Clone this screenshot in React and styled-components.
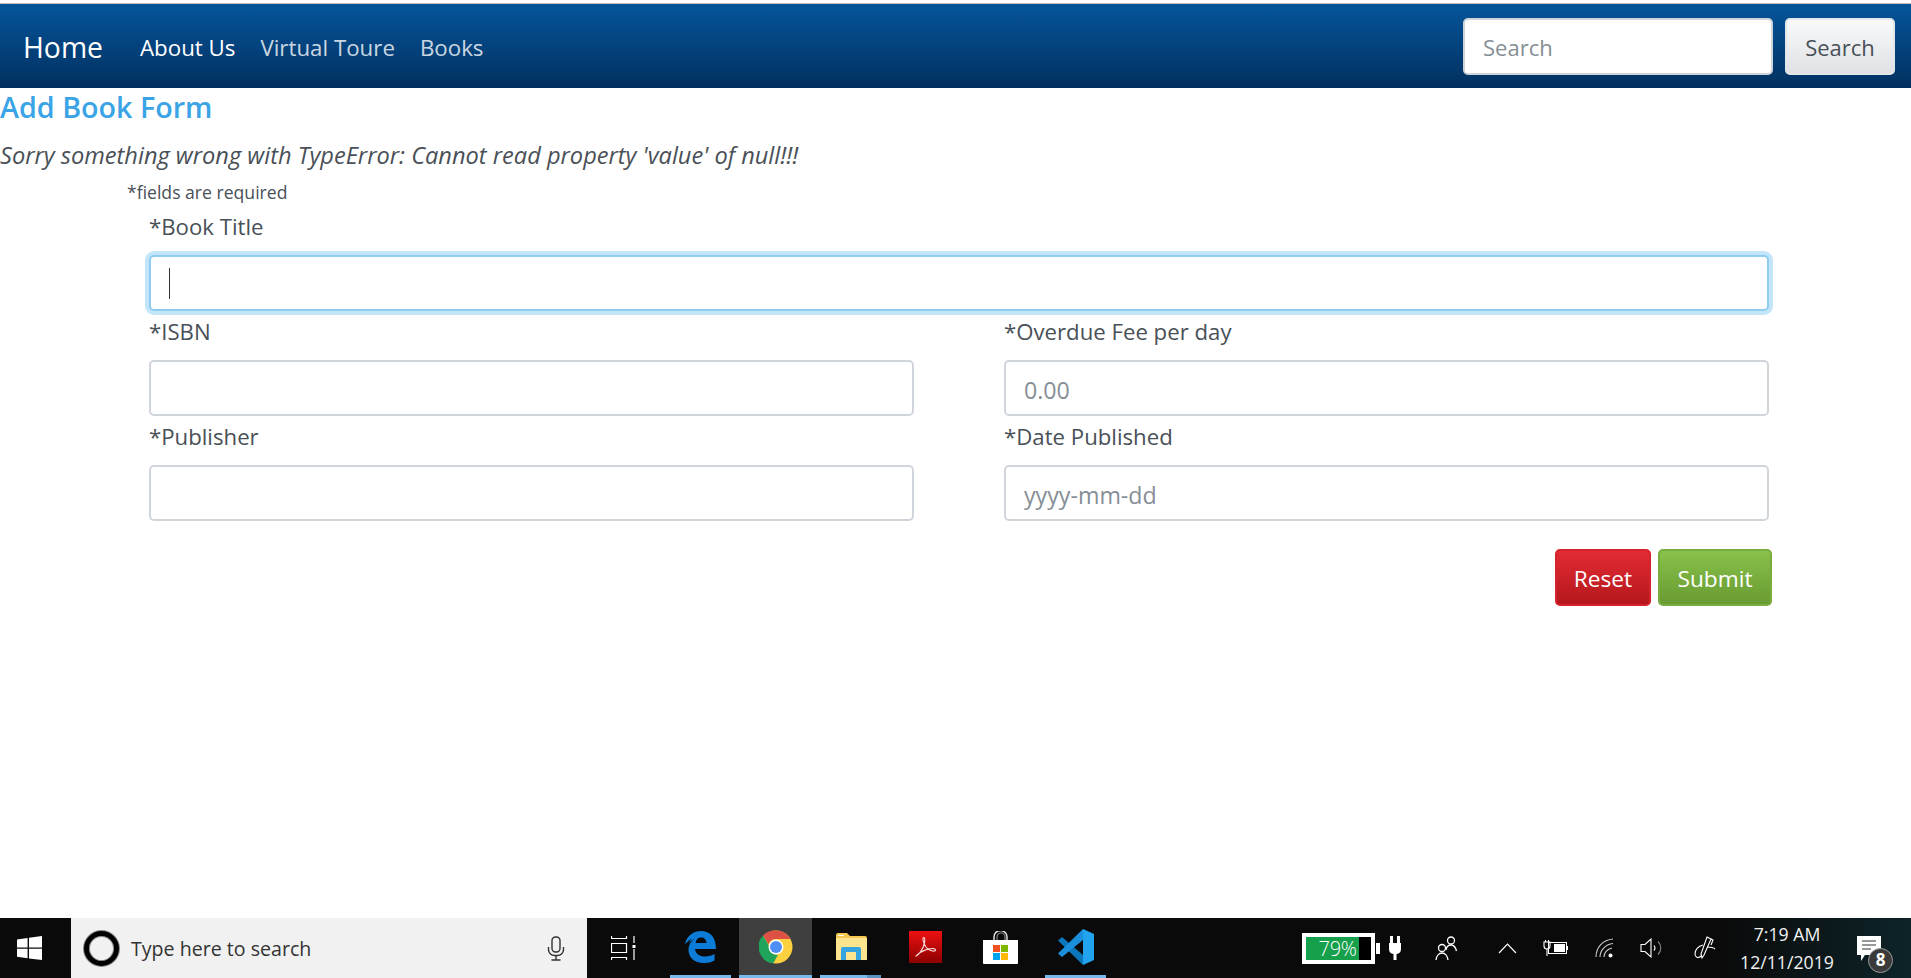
import React from 'react'
import styled, { createGlobalStyle } from 'styled-components'

const FONT = `'Open Sans', 'Noto Sans', sans-serif`

const GlobalStyle = createGlobalStyle`
  html, body {
    margin: 0;
    padding: 0;
    height: 100%;
    background: #fff;
    overflow: hidden;
  }
  * { box-sizing: border-box; }
  #root { height: 100%; }
`

const Page = styled.div`
  height: 978px;
  display: flex;
  flex-direction: column;
  font-family: ${FONT};
  color: #495057;
`

//------------------------------------------------------------------------
// Navbar
//------------------------------------------------------------------------

const Navbar = styled.nav`
  height: 85px;
  flex: none;
  display: flex;
  align-items: center;
  padding: 0 16px 0 23px;
  border-top: 1px solid #bdbdbd;
  margin-top: 3px;
  background: linear-gradient(180deg, #05559b 0%, #02305f 100%);
`

const Brand = styled.a`
  font-size: 28.3px;
  padding-top: 2px;
  color: #fff;
  margin-right: 37px;
`

const NavLink = styled.a`
  font-size: 22.3px;
  padding-top: 2px;
  color: ${props => (props.active ? '#fff' : 'rgba(255,255,255,0.8)')};
  margin-right: 25px;
`

const SearchForm = styled.form`
  margin-left: auto;
  display: flex;
  gap: 12px;
`

const SearchInput = styled.input`
  width: 310px;
  height: 57px;
  padding: 2px 18px 0;
  border: 2px solid #ced4da;
  border-radius: 5px;
  font: 22px ${FONT};
  &::placeholder { color: #868e96; opacity: 1; }
`

const SearchButton = styled.button`
  width: 110px;
  height: 57px;
  padding: 2px 0 0;
  border: 2px solid #e4e7ea;
  border-radius: 5px;
  font: 22px ${FONT};
  color: #495057;
  background: linear-gradient(180deg, #f8f9fa 0%, #dfe2e5 100%);
`

//------------------------------------------------------------------------
// Form
//------------------------------------------------------------------------

const Main = styled.main`
  flex: 1;
`

const Title = styled.h1`
  margin: 0;
  padding-top: 1px;
  font-size: 28.7px;
  line-height: 36px;
  font-weight: 600;
  color: #3ba4e6;
`

const ErrorText = styled.p`
  margin: 15px 0 0;
  font-size: 23.6px;
  line-height: 30px;
  font-style: italic;
`

const FormWrap = styled.form`
  width: 1623px;
  margin-left: 149px;
  padding-top: 10px;
`

const Required = styled.div`
  margin: 0 0 2px -22px;
  font-size: 17.6px;
  line-height: 24px;
`

const Row = styled.div`
  display: grid;
  grid-template-columns: ${props => (props.cols === 2 ? '765px 765px' : '1620px')};
  column-gap: 90px;
`

const Field = styled.div`
  display: flex;
  flex-direction: column;
`

const Label = styled.label`
  height: 48px;
  padding-top: 5px;
  font-size: 22.2px;
  line-height: 32px;
`

const InputWrap = styled.div`
  position: relative;
  margin-top: 1px;
`

const Input = styled.input`
  display: block;
  width: 100%;
  height: 56px;
  padding: 3px 18px 0;
  border: 2px solid ${props => (props.focused ? '#8ecdf0' : '#d0d5dc')};
  border-radius: 5px;
  background: #fff;
  font: 23.2px ${FONT};
  box-shadow: ${props => (props.focused ? '0 0 0 4px #c3e5f9' : 'none')};
  outline: none;
  &::placeholder { color: #868e96; opacity: 1; }
`

const Caret = styled.span`
  position: absolute;
  left: 20px;
  top: 13px;
  width: 1px;
  height: 31px;
  background: #333;
`

const Actions = styled.div`
  display: flex;
  justify-content: flex-end;
  gap: 7px;
  margin-top: 28px;
`

const ActionButton = styled.button`
  height: 57px;
  width: ${props => (props.kind === 'reset' ? '96px' : '114px')};
  padding: 2px 0 0;
  border: 2px solid ${props => (props.kind === 'reset' ? '#d5232d' : '#7aad40')};
  border-radius: 5px;
  color: #fff;
  font: 22.7px ${FONT};
  background: ${props =>
    props.kind === 'reset'
      ? 'linear-gradient(180deg, #e32b34 0%, #b5171d 100%)'
      : 'linear-gradient(180deg, #89c14a 0%, #689b32 100%)'};
`

//------------------------------------------------------------------------
// Taskbar
//------------------------------------------------------------------------

const Taskbar = styled.footer`
  height: 60px;
  flex: none;
  display: flex;
  align-items: stretch;
  color: #fff;
  background: linear-gradient(90deg, #0a0a0a 0%, #0a0a0a 90%, #0d2429 100%);
`

const StartSlot = styled.div`
  width: 71px;
  display: flex;
  align-items: center;
  justify-content: center;
  padding-right: 13px;
`

const TaskSearch = styled.div`
  width: 516px;
  display: flex;
  align-items: center;
  background: #f1f1f1;
  padding: 0 22px 0 13px;
  color: #333;
  font-size: 19.6px;
`

const SearchLabel = styled.span`
  margin-left: 12px;
  flex: 1;
`

const CortanaRing = styled.span`
  width: 35px;
  height: 35px;
  border-radius: 50%;
  border: 5px solid #000;
  box-shadow: 0 0 0 1px #888 inset, 0 0 0 1px #888;
  background: #f1f1f1;
`

const TaskViewSlot = styled.div`
  width: 76px;
  display: flex;
  align-items: center;
  justify-content: center;
  padding-right: 4px;
`

const AppSlot = styled.div`
  position: relative;
  width: 75px;
  display: flex;
  align-items: center;
  justify-content: center;
  padding-bottom: 2px;
  background: ${props => (props.active ? '#3f3f3f' : 'transparent')};
  border-left: ${props => (props.active ? '1px solid #0a0a0a' : '0')};
  border-right: ${props => (props.active ? '1px solid #0a0a0a' : '0')};
`

const AppBar = styled.span`
  position: absolute;
  bottom: 0;
  height: 3px;
  left: ${props => (props.wide ? '0' : '7px')};
  right: ${props => (props.wide ? '0' : '7px')};
  background: ${props =>
    props.stacked ? 'linear-gradient(90deg, #76b9ed 0%, #76b9ed 77%, #5b93c2 77%)' : '#76b9ed'};
`

const Tray = styled.div`
  margin-left: 189px;
  display: flex;
  align-items: stretch;
`

const TraySlot = styled.div`
  position: relative;
  width: ${props => props.w}px;
  display: flex;
  align-items: center;
  justify-content: center;
`

const BatteryBox = styled.div`
  width: 73px;
  height: 31px;
  margin-right: 5px;
  border: 4px solid #fff;
  background: linear-gradient(90deg, #16a04c 0%, #16a04c 81%, #000 81%);
  position: relative;
  font-size: 20px;
  line-height: 23px;
  letter-spacing: -0.4px;
  text-align: center;
  padding-right: 2px;
  color: #fff;
  font-weight: 300;
`

const BatteryTip = styled.span`
  position: absolute;
  right: -9px;
  top: 6px;
  width: 4px;
  height: 11px;
  background: #fff;
`

const Clock = styled.div`
  text-align: center;
  font-size: 17.7px;
  line-height: 28px;
  white-space: nowrap;
  color: #f2f2f2;
  margin-top: -1px;
`

const Badge = styled.span`
  position: absolute;
  left: 30px;
  top: 30px;
  width: 25px;
  height: 25px;
  border-radius: 50%;
  background: #3a3a3a;
  border: 1px solid #9a9a9a;
  font-size: 17px;
  font-weight: 700;
  line-height: 22px;
  text-align: center;
`

const NotifyIcon = styled.svg`
  position: absolute;
  left: 19px;
  top: 18px;
`

//------------------------------------------------------------------------
// Icons
//------------------------------------------------------------------------

const WindowsIcon = () => (
  <svg width="25" height="24" viewBox="0 0 25 24" fill="#fff">
    <path d="M0 3.4 10.6 1.9V11.5H0zM12 1.7 25 0V11.5H12zM0 12.7H10.6V22.2L0 20.7zM12 12.7H25V24L12 22.4z" />
  </svg>
)

const MicIcon = () => (
  <svg width="18" height="25" viewBox="0 0 18 25" fill="none" stroke="#333" strokeWidth="1.4">
    <rect x="5" y="1" width="8" height="15" rx="3.5" />
    <path d="M1.5 11v2.5a6 6 0 0 0 6 6h3a6 6 0 0 0 6-6V11M9 20v3.5M4.5 24h9" />
  </svg>
)

const TaskViewIcon = () => (
  <svg width="25" height="24" viewBox="0 0 25 24" fill="none" stroke="#fff" strokeWidth="1.2">
    <path d="M0.5 0v2.5h15V0M0.5 7.5h15v9h-15zM0.5 24v-2.5h15V24M23 0v7M23 13v11" />
    <rect x="21.5" y="9" width="3" height="3" fill="#fff" stroke="none" />
  </svg>
)

const EdgeIcon = () => (
  <svg width="31" height="32" viewBox="0 0 31 32">
    <path
      fill="#0c7cd8"
      d="M0 13C2 4 9 0 16 0c9 0 15 6 15 18H10c.5 5 5 7.5 10 7.5 4 0 7-1 9.500-2.500v6.500C26.500 31.200 23 32 19 32 9 32 3.500 26 3.500 19c0-5 2.500-9 7-11.500C7 9 5 10.500 3.500 13 6 7 10 4.500 0 13zm10.500-1h11c0-3.500-2.500-5.500-5.500-5.500s-5 2-5.500 5.500z"
    />
  </svg>
)

const ChromeIcon = () => (
  <svg width="34" height="34" viewBox="0 0 34 34">
    <circle cx="17" cy="17" r="16.500" fill="#fdd03f" />
    <path fill="#dd5144" d="M17 .5a16.500 16.500 0 0 1 14.500 8.500H17a8 8 0 0 0-7.500 5.200L4 5.500A16.500 16.500 0 0 1 17 .5z" />
    <path fill="#20a35a" d="M4 5.500l6 10.300a8 8 0 0 0 9 8.900l-4.700 8.500A16.500 16.500 0 0 1 4 5.500z" />
    <circle cx="17" cy="17" r="7.500" fill="#fff" />
    <circle cx="17" cy="17" r="6" fill="#4f8ff5" />
  </svg>
)

const ExplorerIcon = () => (
  <svg width="32" height="28" viewBox="0 0 32 28">
    <path fill="#f5c94f" d="M1 2a2 2 0 0 1 2-2h9l3 3h15a2 2 0 0 1 2 2v21a1 1 0 0 1-1 1H2a1 1 0 0 1-1-1z" />
    <path fill="#fde48f" d="M1 5h31v21a1 1 0 0 1-1 1H2a1 1 0 0 1-1-1z" />
    <path fill="#fff" d="M3 2h6v1H3z" />
    <path fill="#35a4e0" d="M6 27V16a2 2 0 0 1 2-2h16a2 2 0 0 1 2 2v11h-5v-8H11v8z" />
  </svg>
)

const AcrobatIcon = () => (
  <svg width="33" height="32" viewBox="0 0 33 32">
    <defs>
      <linearGradient id="acro" x1="0" y1="0" x2="0" y2="1">
        <stop offset="0" stopColor="#ee1111" />
        <stop offset="1" stopColor="#8c0000" />
      </linearGradient>
    </defs>
    <rect width="33" height="32" fill="url(#acro)" />
    <path
      fill="none"
      stroke="#f6dcdc"
      strokeWidth="1.100"
      d="M7 25c3-1 7-7 8.500-13 .6-3 .2-6-1-5.500-1.300.6-.3 5 2 9 2 3 6 5 9 4.500 2-.4 1-2.500-2-2.500-5 0-13 3.500-15.500 6.500-1 1.300-1.300 1.500-1 1z"
    />
  </svg>
)

const StoreIcon = () => (
  <svg width="35" height="33" viewBox="0 0 35 33">
    <path d="M11 9V6a6.500 6.500 0 0 1 13 0v3" fill="none" stroke="#ddd" strokeWidth="1.500" />
    <path d="M14 9V6a4 4 0 0 1 8 0v3" fill="none" stroke="#888" strokeWidth="1.200" />
    <path fill="#fff" d="M0 9h35v23a1 1 0 0 1-1 1H1a1 1 0 0 1-1-1z" />
    <rect x="10" y="14" width="7" height="7" fill="#f25022" />
    <rect x="18" y="14" width="7" height="7" fill="#7fba00" />
    <rect x="10" y="22" width="7" height="7" fill="#00a4ef" />
    <rect x="18" y="22" width="7" height="7" fill="#ffb900" />
  </svg>
)

const VSCodeIcon = () => (
  <svg width="36" height="36" viewBox="0 0 36 36">
    <path fill="#0a77bd" d="M0 11.500 4 8 25 26V36z" />
    <path fill="#1a8fdc" d="M25 0V11L4 28 0 24.500z" />
    <path fill="#22a3ee" d="M25 0 36 5V31L25 36z" />
  </svg>
)

const PlugIcon = () => (
  <svg width="12" height="24" viewBox="0 0 12 24" fill="#fff">
    <path d="M1 0h3v7h4V0h3v7h1v6a5 5 0 0 1-4.500 5V24h-3v-6A5 5 0 0 1 0 13V7h1z" />
  </svg>
)

const PeopleIcon = () => (
  <svg width="24" height="24" viewBox="0 0 24 24" fill="none" stroke="#fff" strokeWidth="1.300">
    <circle cx="16" cy="4.500" r="3.500" />
    <path d="M11 14c.5-3 2.500-5 5-5s4.500 2 5.500 6" />
    <circle cx="7" cy="12" r="3.500" />
    <path d="M1 24c.5-4 3-7 6-7s5.500 3 6 7" />
  </svg>
)

const ChevronIcon = () => (
  <svg width="19" height="11" viewBox="0 0 19 11" fill="none" stroke="#fff" strokeWidth="1.200">
    <path d="M1 10 9.500 1 18 10" />
  </svg>
)

const PowerIcon = () => (
  <svg width="25" height="16" viewBox="0 0 25 16">
    <rect x="5.500" y="2.500" width="18" height="11" fill="none" stroke="#fff" />
    <rect x="11" y="4" width="11" height="8" fill="#fff" />
    <rect x="24" y="6" width="1" height="4" fill="#fff" />
    <path d="M1 2h6v4a3 3 0 0 1-6 0zM2.500 0v2M5.500 0v2M4 9v7" fill="none" stroke="#fff" strokeWidth="1.100" />
  </svg>
)

const WifiIcon = () => (
  <svg width="19" height="20" viewBox="0 0 19 20" fill="none" stroke="#ccc" strokeWidth="1.100">
    <path d="M1 19C1 9 8 2 18 1M5 19C5 12 11 6 18 5.500M9 19c0-4 3-8 8-9" />
    <circle cx="15.500" cy="17.500" r="2" fill="#fff" stroke="none" />
  </svg>
)

const SpeakerIcon = () => (
  <svg width="23" height="20" viewBox="0 0 23 20" fill="none" stroke="#fff" strokeWidth="1.100">
    <path d="M1 6.500h4L11 1v18l-6-5.500H1z" />
    <path d="M14 7.500a4 4 0 0 1 0 5" />
    <path d="M18 3.500a9 9 0 0 1 0 13" stroke="#888" />
  </svg>
)

const PenIcon = () => (
  <svg width="22" height="24" viewBox="0 0 22 24" fill="none" stroke="#fff" strokeWidth="1.100">
    <path d="M13 1l4 2-7 16-2 3-1-4zM17 3l2 1-2 5" />
    <path d="M9 9C4 10 1 14 1 18c0 3 3 5 6 2M13 11c3 0 7 1 8 2" />
  </svg>
)

const FormField = ({ label, placeholder, focused }) => (
  <Field>
    <Label>{label}</Label>
    <InputWrap>
      <Input focused={focused} placeholder={placeholder} readOnly />
      {focused && <Caret />}
    </InputWrap>
  </Field>
)

export default function App() {
  return (
    <Page>
      <GlobalStyle />
      <Navbar>
        <Brand>Home</Brand>
        <NavLink active>About Us</NavLink>
        <NavLink>Virtual Toure</NavLink>
        <NavLink>Books</NavLink>
        <SearchForm>
          <SearchInput placeholder="Search" readOnly />
          <SearchButton type="button">Search</SearchButton>
        </SearchForm>
      </Navbar>

      <Main>
        <Title>Add Book Form</Title>
        <ErrorText>Sorry something wrong with TypeError: Cannot read property 'value' of null!!!</ErrorText>
        <FormWrap>
          <Required>*fields are required</Required>
          <Row>
            <FormField label="*Book Title" focused />
          </Row>
          <Row cols={2}>
            <FormField label="*ISBN" />
            <FormField label="*Overdue Fee per day" placeholder="0.00" />
          </Row>
          <Row cols={2}>
            <FormField label="*Publisher" />
            <FormField label="*Date Published" placeholder="yyyy-mm-dd" />
          </Row>
          <Actions>
            <ActionButton type="button" kind="reset">Reset</ActionButton>
            <ActionButton type="button" kind="submit">Submit</ActionButton>
          </Actions>
        </FormWrap>
      </Main>

      <Taskbar>
        <StartSlot><WindowsIcon /></StartSlot>
        <TaskSearch>
          <CortanaRing />
          <SearchLabel>Type here to search</SearchLabel>
          <MicIcon />
        </TaskSearch>
        <TaskViewSlot><TaskViewIcon /></TaskViewSlot>
        <AppSlot><EdgeIcon /><AppBar /></AppSlot>
        <AppSlot active><ChromeIcon /><AppBar wide /></AppSlot>
        <AppSlot><ExplorerIcon /><AppBar stacked /></AppSlot>
        <AppSlot><AcrobatIcon /></AppSlot>
        <AppSlot><StoreIcon /></AppSlot>
        <AppSlot><VSCodeIcon /><AppBar /></AppSlot>
        <Tray>
          <TraySlot w={78}>
            <BatteryBox>79%<BatteryTip /></BatteryBox>
          </TraySlot>
          <TraySlot w={30}><PlugIcon /></TraySlot>
          <TraySlot w={74}><PeopleIcon /></TraySlot>
          <TraySlot w={46}><ChevronIcon /></TraySlot>
          <TraySlot w={50}><PowerIcon /></TraySlot>
          <TraySlot w={48}><WifiIcon /></TraySlot>
          <TraySlot w={46}><SpeakerIcon /></TraySlot>
          <TraySlot w={62}><PenIcon /></TraySlot>
          <TraySlot w={102}>
            <Clock>7:19 AM<br />12/11/2019</Clock>
          </TraySlot>
          <TraySlot w={73}>
            <NotifyIcon width="24" height="26" viewBox="0 0 24 26" fill="none">
              <path fill="#fff" d="M0 0h24v19H8l-4 6v-6H0z" />
              <path stroke="#333" strokeWidth="1.200" d="M5 5h14M5 9h14M5 13h9" />
            </NotifyIcon>
            <Badge>8</Badge>
          </TraySlot>
        </Tray>
      </Taskbar>
    </Page>
  )
}
